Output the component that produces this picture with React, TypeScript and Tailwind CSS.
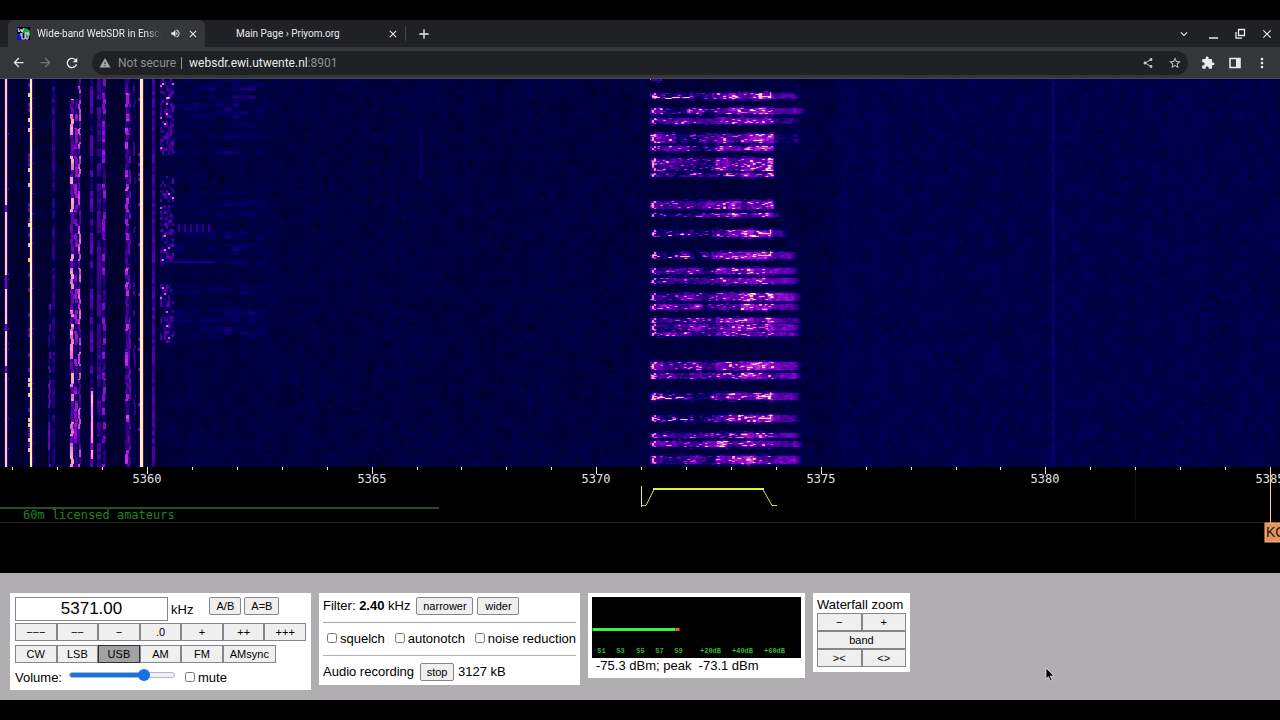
import React, { useEffect, useRef, useState } from "react";
import {
  MdAdd,
  MdArrowBack,
  MdArrowForward,
  MdClose,
  MdExpandMore,
  MdExtension,
  MdMoreVert,
  MdRefresh,
  MdShare,
  MdStarBorder,
  MdVolumeUp,
  MdWarning,
} from "react-icons/md";

const WATERFALL_WIDTH = 1280;
const WATERFALL_HEIGHT = 388;

// Carriers on the left side of the band: position, width, level, dropout
const carriers = [
  { x: 5, w: 2, level: 0.95, gaps: 0.08 },
  { x: 30, w: 2, level: 1, gaps: 0 },
  { x: 52, w: 3, level: 0.34, gaps: 0.3 },
  { x: 48, w: 2, level: 0.5, gaps: 0.6, from: 225 },
  { x: 70, w: 3, level: 0.84, gaps: 0.45, from: 20 },
  { x: 74, w: 3, level: 0.6, gaps: 0.5, from: 20 },
  { x: 78, w: 2, level: 0.76, gaps: 0.5 },
  { x: 90, w: 3, level: 0.48, gaps: 0.3 },
  { x: 91, w: 2, level: 0.9, gaps: 0.15, from: 312, to: 380 },
  { x: 97, w: 4, level: 0.4, gaps: 0.25 },
  { x: 102, w: 3, level: 0.6, gaps: 0.5 },
  { x: 125, w: 3, level: 0.7, gaps: 0.55 },
  { x: 128, w: 2, level: 0.5, gaps: 0.5 },
  { x: 133, w: 2, level: 0.38, gaps: 0.7 },
  { x: 140, w: 3, level: 1, gaps: 0.02 },
  { x: 152, w: 3, level: 0.42, gaps: 0 },
];

// Bursts of the data signal: centre, height, right edge, level of the right part
const bursts = [
  { y: 0, h: 3, end: 662, tail: 0 },
  { y: 17, h: 6, end: 802, tail: 0.42, hook: true },
  { y: 32, h: 6, end: 806, tail: 0.48 },
  { y: 42, h: 6, end: 804, tail: 0.34 },
  { y: 59, h: 9, end: 804, tail: 0.28 },
  { y: 69, h: 5, end: 804, tail: 0.26 },
  { y: 85, h: 13, end: 774, tail: 0 },
  { y: 96, h: 4, end: 780, tail: 0.3 },
  { y: 126, h: 8, end: 778, tail: 0.34 },
  { y: 136, h: 4, end: 784, tail: 0.38 },
  { y: 154, h: 7, end: 788, tail: 0.44, hook: true },
  { y: 176, h: 7, end: 798, tail: 0.48, hook: true },
  { y: 192, h: 6, end: 799, tail: 0.54 },
  { y: 202, h: 6, end: 801, tail: 0.54 },
  { y: 218, h: 8, end: 802, tail: 0.54 },
  { y: 228, h: 6, end: 802, tail: 0.5 },
  { y: 241, h: 5, end: 802, tail: 0.48 },
  { y: 248, h: 7, end: 802, tail: 0.48 },
  { y: 255, h: 4, end: 801, tail: 0.48 },
  { y: 287, h: 8, end: 802, tail: 0.54 },
  { y: 297, h: 6, end: 802, tail: 0.5 },
  { y: 317, h: 7, end: 802, tail: 0.48, hook: true },
  { y: 339, h: 7, end: 802, tail: 0.48, hook: true },
  { y: 356, h: 5, end: 802, tail: 0.5 },
  { y: 365, h: 6, end: 804, tail: 0.48 },
  { y: 381, h: 8, end: 802, tail: 0.54 },
];

// Level to colour, from dark blue over purple to pale yellow
const palette = [
  [0, 0, 0, 16],
  [0.25, 0, 0, 96],
  [0.38, 50, 0, 132],
  [0.55, 116, 0, 190],
  [0.7, 184, 30, 222],
  [0.84, 246, 140, 206],
  [1, 255, 242, 160],
];

const noise = (x: number, y: number, seed: number) => {
  let h =
    Math.imul(x + 17, 374761393) ^
    Math.imul(y + 31, 668265263) ^
    Math.imul(seed + 7, 1442695041);
  h = Math.imul(h ^ (h >>> 13), 1274126177);
  h = Math.imul(h ^ (h >>> 16), 2246822519);
  return ((h ^ (h >>> 15)) >>> 0) / 4294967296;
};

const colorOf = (level: number) => {
  const v = Math.max(0, Math.min(1, level));
  for (let i = 1; i < palette.length; i++) {
    const a = palette[i - 1];
    const b = palette[i];
    if (v <= b[0]) {
      const t = (v - a[0]) / (b[0] - a[0]);
      return [1, 2, 3].map((c) => a[c] + (b[c] - a[c]) * t);
    }
  }
  return [255, 242, 160];
};

const buildLevels = () => {
  const w = WATERFALL_WIDTH;
  const h = WATERFALL_HEIGHT;
  const levels = new Float32Array(w * h);
  const raise = (x: number, y: number, v: number) => {
    if (x < 0 || y < 0 || x >= w || y >= h) return;
    levels[y * w + x] = Math.max(levels[y * w + x], v);
  };
  // Averages a column range with its neighbours
  const smooth = (from: number, to: number) => {
    const copy = levels.slice();
    for (let y = 1; y < h - 1; y++) {
      for (let x = from; x < to; x++) {
        const i = y * w + x;
        levels[i] =
          copy[i] * 0.5 +
          (copy[i - 1] + copy[i + 1]) * 0.16 +
          (copy[i - w] + copy[i + w]) * 0.09;
      }
    }
  };

  // Noise floor
  for (let y = 0; y < h; y++) {
    for (let x = 0; x < w; x++) {
      let v = x > 835 ? 0.18 : 0.15;
      if (x < 160) v = 0.11;
      if (x > 648 && x < 776) v = 0.13;
      v += (noise(x >> 1, Math.floor(y / 3), 1) - 0.5) * 0.05;
      v += (noise(x >> 3, y >> 3, 2) - 0.5) * 0.05;
      v += (noise(x >> 2, 0, 3) - 0.5) * 0.02;
      if (noise(x >> 2, y >> 2, 4) > 0.97) v -= 0.06;
      levels[y * w + x] = v;
    }
  }
  smooth(1, w - 1);

  // Weak steady lines
  for (let y = 0; y < h; y++) {
    for (let x = 1051; x < 1055; x++) {
      raise(x, y, 0.24 + noise(x, y >> 2, 19) * 0.05);
    }
    for (let x = 843; x < 846; x++) raise(x, y, 0.21);
    if (y > 55 && y < 100) {
      raise(420, y, 0.27);
      raise(421, y, 0.27);
    }
  }

  // Mottled voice signal
  [
    [0, 76],
    [97, 186],
    [205, 264],
  ].forEach(([from, to]) => {
    for (let y = from; y < to; y++) {
      for (let x = 160; x < 174; x++) {
        const r = noise(x >> 1, Math.floor(y / 3), 10);
        if (r > 0.4) raise(x, y, 0.22 + (r - 0.4) * 0.55);
        if (noise(x >> 1, y >> 1, 11) > 0.98) raise(x, y, 0.95);
      }
      const row = noise(0, Math.floor(y / 4), 12);
      if (row > 0.3) {
        for (let x = 174; x < 268; x++) {
          const r = noise(x >> 3, Math.floor(y / 4), 13);
          const near = x > 222 && x < 257 ? 0.04 : 0;
          if (r > 0.35) raise(x, y, 0.16 + near + (r - 0.35) * 0.2 * row);
        }
      }
    }
  });
  for (let x = 178; x < 214; x += 6) {
    for (let y = 145; y < 153; y++) {
      raise(x, y, 0.5);
      raise(x + 1, y, 0.44);
    }
  }
  for (let x = 165; x < 215; x++) {
    raise(x, 182, 0.36);
    raise(x, 183, 0.34);
  }
  smooth(158, 290);
  smooth(174, 290);

  carriers.forEach((c, n) => {
    for (let y = c.from ?? 0; y < (c.to ?? h); y++) {
      const off = noise(n, Math.floor(y / 7), 5) < c.gaps;
      const shift =
        c.gaps > 0.35 ? Math.floor(noise(n, Math.floor(y / 5), 6) * 2) : 0;
      const v = off ? c.level * 0.6 : c.level;
      const jitter = c.level > 0.94 ? 0 : (noise(n, y >> 2, 8) - 0.5) * 0.12;
      for (let i = 0; i < c.w; i++) {
        raise(c.x + i + shift, y, v + jitter);
      }
      raise(c.x - 1, y, v * 0.34);
      raise(c.x + c.w, y, v * 0.45);
    }
  });

  // Keying knobs beside the carriers
  for (let y = 4; y < h; y += 5) {
    const r = noise(1, y, 9);
    if (r > 0.5) {
      for (let j = 0; j < 4; j++) {
        raise(28, y + j, r > 0.75 ? 0.9 : 0.5);
        raise(29, y + j, r > 0.75 ? 0.92 : 0.6);
      }
    }
    if (noise(2, y, 9) > 0.75) raise(33, y, 0.6);
    if (noise(3, y, 9) > 0.85) {
      for (let j = 0; j < 3; j++) {
        raise(138, y + j, 0.55);
        raise(139, y + j, 0.6);
      }
    }
    if (noise(4, y, 9) > 0.85) {
      raise(8, y, 0.5);
      raise(8, y + 1, 0.5);
      raise(4, y + 1, 0.5);
    }
  }

  // Data signal
  bursts.forEach((b, n) => {
    const top = b.y - Math.floor(b.h / 2);
    for (let j = -2; j < b.h + 2; j++) {
      const y = top + j;
      const soft = j < 0 || j >= b.h;
      for (let x = 650; x < b.end; x++) {
        const patch = noise(Math.floor(x / 13), n, 14);
        const streak = noise(Math.floor((x + y) / 5), y >> 1, 15);
        const fine = noise(x >> 1, y >> 1, 16);
        let v = 0.18 + patch * 0.24 + streak * 0.2 + (fine - 0.5) * 0.18;
        if (x > 715 && x < 774) v += 0.1;
        if (x > 745 && x < 773) v += 0.06;
        if (b.hook && x > 693 && x < 712) v -= 0.16;
        if (b.hook && x < 693) v -= 0.06;
        const limit = x > 715 && x < 773 ? 0.85 : 0.91;
        if (noise(Math.floor(x / 3), y, 17) > limit && x < 774) v += 0.44;
        if (x >= 774) {
          v = b.tail - 0.08 + (patch - 0.5) * 0.1 + streak * 0.14;
          v += (fine - 0.5) * 0.1;
          // fades out towards the right edge
          v *= Math.min(1, 0.35 + (b.end - x) / 12);
        }
        if (soft) v = v * 0.5;
        raise(x, y, v);
      }
      if (!soft && b.end > 770) {
        const arc = Math.abs(j - b.h / 2) > b.h / 4 ? 2 : 0;
        raise(652 + arc, y, 0.95);
        raise(653 + arc, y, 0.95);
      }
    }
    if (b.hook) {
      for (let x = 654; x < 690; x++) {
        const y = b.y + Math.round(Math.sin((x - 654) / 7) + (x - 654) / 20);
        if (noise(x >> 2, n, 18) > 0.3) raise(x, y, 1.1);
      }
      for (let x = 758; x < 771; x++) raise(x, b.y, 1);
      for (let y = b.y - 4; y < b.y + 1; y++) raise(770, y, 1.1);
    }
  });
  smooth(646, 810);

  return levels;
};

const Waterfall = () => {
  const ref = useRef<HTMLCanvasElement>(null);

  useEffect(() => {
    const ctx = ref.current?.getContext("2d");
    if (!ctx) return;
    const levels = buildLevels();
    const image = ctx.createImageData(WATERFALL_WIDTH, WATERFALL_HEIGHT);
    for (let i = 0; i < levels.length; i++) {
      const [r, g, b] = colorOf(levels[i]);
      image.data[i * 4] = r;
      image.data[i * 4 + 1] = g;
      image.data[i * 4 + 2] = b;
      image.data[i * 4 + 3] = 255;
    }
    ctx.putImageData(image, 0, 0);
  }, []);

  return (
    <canvas
      ref={ref}
      width={WATERFALL_WIDTH}
      height={WATERFALL_HEIGHT}
      className="block w-full h-[388px] object-cover object-left"
      aria-label="Waterfall"
    />
  );
};

const FrequencyScale = () => {
  const ticks = Array.from({ length: 29 }, (_, i) => 5357 + i);
  const xOf = (khz: number) => Math.round(147 + (khz - 5360) * 44.92);
  return (
    <svg className="block w-full h-[106px] bg-black" aria-label="Frequency scale">
      {ticks.map((khz) => (
        <rect
          key={khz}
          x={xOf(khz)}
          y={0}
          width={1}
          height={khz % 5 === 0 ? 7 : 3}
          fill="#e8e8e8"
        />
      ))}
      <g
        fontFamily="'DejaVu Sans Mono', monospace"
        fontSize={12}
        fill="#e4e4e4"
        textAnchor="middle"
      >
        {ticks
          .filter((khz) => khz % 5 === 0)
          .map((khz) => (
            <text key={khz} x={xOf(khz)} y={16}>
              {khz}
            </text>
          ))}
      </g>
      <rect x={0} y={40} width={439} height={2} fill="#25502a" />
      <text
        x={23}
        y={52}
        fontFamily="'DejaVu Sans Mono', monospace"
        fontSize={12}
        fill="#228326"
      >
        60m licensed amateurs
      </text>
      <rect x={0} y={55} width="100%" height={1} fill="#242126" />
      <rect x={1135} y={3} width={1} height={50} fill="#111111" />
      <path d="M641.5 19V40" stroke="#f0f050" fill="none" />
      <path
        d="M641 38.5H646L654 22.5M763 22.5L772 38.5H777"
        stroke="#d8e030"
        fill="none"
      />
      <path d="M653 22H764" stroke="#e2f52c" strokeWidth={2} fill="none" />
      <rect x={1270} y={0} width={1} height={56} fill="#ffc9a8" />
      <rect x={1265} y={56} width={60} height={19} fill="#e2935e" stroke="#f0b48a" />
      <text
        x={1266}
        y={70}
        fontFamily="'Liberation Sans', Arial, sans-serif"
        fontSize={14}
        fill="#2a1408"
      >
        KC
      </text>
    </svg>
  );
};

const Favicon = () => (
  <svg width="13" height="13" viewBox="0 0 13 13" className="shrink-0">
    <rect width="13" height="13" fill="#05052c" />
    <path d="M0 7h5v6H0z" fill="#1018c8" />
    <path d="M5 3q4-4 8 1v5h-3V6H5z" fill="#18a838" />
    <path
      d="M1 1l1 4 2-3 1 3 2-4M4 6v3M5 6v6h3V6M8 6h4M9 6v6h2V6"
      stroke="#e8f0ff"
      strokeWidth="1"
      fill="none"
    />
  </svg>
);

const BrowserHeader = () => {
  return (
    <header className="font-['Roboto',sans-serif] text-xs text-[#e8eaed]">
      <div className="flex h-[27px] items-stretch bg-[#202124]">
        <div className="w-2 shrink-0 bg-[#202124]" />
        <div className="flex w-[197px] shrink-0 items-center rounded-t-md bg-[#35363a] pl-[9px] pr-[6px]">
          <Favicon />
          <span className="ml-[7px] w-[125px] overflow-hidden pt-px text-[10px] leading-4 whitespace-nowrap [mask-image:linear-gradient(to_right,black_88%,transparent)]">
            Wide-band WebSDR in Enschede
          </span>
          <MdVolumeUp className="ml-[9px] size-[11px]" />
          <button aria-label="Close tab" className="ml-[6px]">
            <MdClose className="size-[12px]" />
          </button>
        </div>
        <div className="my-[6px] flex w-[201px] shrink-0 items-center border-r border-[#44454a] pl-[31px] pr-[6px]">
          <span className="grow pt-px text-[10px] leading-4 whitespace-nowrap">
            Main Page › Priyom.org
          </span>
          <button aria-label="Close tab">
            <MdClose className="size-[12px]" />
          </button>
        </div>
        <button aria-label="New tab" className="ml-[10px]">
          <MdAdd className="size-4" />
        </button>
        <div className="ml-auto flex items-center gap-[14px] pr-[6px]">
          <button aria-label="Search tabs" className="mr-[3px]">
            <MdExpandMore className="size-[14px]" />
          </button>
          <button aria-label="Minimize">
            <svg width="12" height="12" viewBox="0 0 12 12">
              <path d="M1 10h9" stroke="currentColor" strokeWidth="1.5" />
            </svg>
          </button>
          <button aria-label="Restore">
            <svg width="12" height="12" viewBox="0 0 12 12" fill="none" stroke="currentColor" strokeWidth="1.3">
              <path d="M4.5 1.5h6v6h-6zM2 4v6.2h6" />
            </svg>
          </button>
          <button aria-label="Close">
            <MdClose className="size-[14px]" />
          </button>
        </div>
      </div>
      <div className="flex h-8 items-center border-b border-[#4a4a55] bg-[#35363a] pr-[10px] pl-[11px]">
        <button aria-label="Back">
          <MdArrowBack className="size-[15px]" />
        </button>
        <button aria-label="Forward" className="ml-[12px] text-[#76777b]">
          <MdArrowForward className="size-[15px]" />
        </button>
        <button aria-label="Reload" className="ml-[11px]">
          <MdRefresh className="size-4" />
        </button>
        <div className="ml-[12px] flex h-6 grow items-center rounded-full bg-[#202124] pr-[6px] pl-[7px]">
          <MdWarning className="size-[12px] text-[#a4a6aa]" />
          <span className="ml-[7px] text-[#8e9094]">Not secure</span>
          <span className="ml-[5px] h-3 w-px bg-[#8e9094]" />
          <a href="#" className="ml-[7px]">
            websdr.ewi.utwente.nl<span className="text-[#8e9094]">:8901</span>
          </a>
          <button aria-label="Share" className="ml-auto">
            <MdShare className="size-[12px] text-[#c4c6ca]" />
          </button>
          <button aria-label="Bookmark" className="ml-[14px]">
            <MdStarBorder className="size-[14px] text-[#c4c6ca]" />
          </button>
        </div>
        <button aria-label="Extensions" className="ml-[13px]">
          <MdExtension className="size-[14px]" />
        </button>
        <button aria-label="Side panel" className="ml-[14px]">
          <svg width="12" height="12" viewBox="0 0 12 12">
            <path d="M1 1.5h10v9H1z" stroke="currentColor" strokeWidth="1.6" fill="none" />
            <path d="M7 1h4v10H7z" fill="currentColor" />
          </svg>
        </button>
        <button aria-label="Menu" className="ml-[13px]">
          <MdMoreVert className="size-4" />
        </button>
      </div>
    </header>
  );
};

type ButtonProps = React.ButtonHTMLAttributes<HTMLButtonElement> & {
  pressed?: boolean;
};

const Button = ({ pressed, className = "", ...props }: ButtonProps) => (
  <button
    className={`h-[18px] border text-[11px] leading-[16px] text-black ${
      pressed ? "border-[#303038] bg-[#a2a2a2]" : "border-[#86868a] bg-[#efeff0]"
    } ${className}`}
    {...props}
  />
);

const Check = ({ label }: { label: string }) => (
  <label className="flex items-center gap-[3px] whitespace-nowrap">
    <input type="checkbox" className="mb-[2px] size-[10px]" />
    {label}
  </label>
);

const tuneSteps = ["−−−", "−−", "−", ".0", "+", "++", "+++"];
const modes = ["CW", "LSB", "USB", "AM", "FM", "AMsync"];

const TuningPanel = () => {
  const [frequency, setFrequency] = useState("5371.00");
  const [mode, setMode] = useState("USB");
  const [volume, setVolume] = useState(74);

  return (
    <section className="w-[301px] bg-white px-[5px] pt-1 pb-[3px]">
      <div className="flex items-start">
        <input
          aria-label="Frequency"
          value={frequency}
          onChange={(e) => setFrequency(e.target.value)}
          className="h-6 w-[153px] border border-[#86868a] bg-white text-center text-[17px]"
        />
        <span className="mt-[5px] ml-[3px]">kHz</span>
        <Button className="ml-4 w-8 rounded-xs">A/B</Button>
        <Button className="ml-[3px] w-[35px] rounded-xs">A=B</Button>
      </div>
      <div className="mt-[2px] grid grid-cols-7">
        {tuneSteps.map((step) => (
          <Button key={step}>{step}</Button>
        ))}
      </div>
      <div className="mt-[4px] grid grid-cols-7">
        {modes.map((m) => (
          <Button
            key={m}
            pressed={m === mode}
            onClick={() => setMode(m)}
            className={m === "AMsync" ? "w-[53px]" : ""}
          >
            {m}
          </Button>
        ))}
      </div>
      <div className="mt-[2px] flex h-[22px] items-center">
        <label htmlFor="volume" className="mt-[3px]">
          Volume:
        </label>
        <input
          id="volume"
          type="range"
          value={volume}
          onChange={(e) => setVolume(Number(e.target.value))}
          style={{
            backgroundImage: `linear-gradient(to right, #1573e6 ${volume}%, #f1f1f3 ${volume}%)`,
          }}
          className="mb-[3px] ml-[7px] h-[6px] w-[106px] appearance-none rounded-full border border-[#b4b6c4] bg-origin-border [&::-webkit-slider-thumb]:size-3 [&::-webkit-slider-thumb]:appearance-none [&::-webkit-slider-thumb]:rounded-full [&::-webkit-slider-thumb]:bg-[#1573e6]"
        />
        <div className="mt-[3px] ml-[10px]">
          <Check label="mute" />
        </div>
      </div>
    </section>
  );
};

const FilterPanel = () => {
  return (
    <section className="w-[261px] bg-white p-1">
      <div className="flex items-center">
        <span>
          Filter: <b>2.40</b> kHz
        </span>
        <Button className="ml-[6px] w-[57px] rounded-xs">narrower</Button>
        <Button className="ml-[4px] w-[42px] rounded-xs">wider</Button>
      </div>
      <hr className="mt-[7px] border-[#a4a4a4]" />
      <div className="flex h-8 items-center justify-between pl-1">
        <Check label="squelch" />
        <Check label="autonotch" />
        <Check label="noise reduction" />
      </div>
      <hr className="border-[#b4b4b4]" />
      <div className="mt-[7px] flex items-center">
        Audio recording
        <Button className="mr-1 ml-[6px] w-[34px] rounded-xs">stop</Button>
        3127 kB
      </div>
    </section>
  );
};

const meterLabels = [
  { text: "S1", x: 9 },
  { text: "S3", x: 28 },
  { text: "S5", x: 48 },
  { text: "S7", x: 67 },
  { text: "S9", x: 86 },
  { text: "+20dB", x: 118 },
  { text: "+40dB", x: 150 },
  { text: "+60dB", x: 182 },
];

const SignalPanel = () => {
  return (
    <section className="w-[217px] bg-white p-1">
      <svg viewBox="0 0 208 61" className="block h-[61px] w-full bg-black" aria-label="Signal strength">
        <rect x={0} y={31} width={83} height={3} fill="#3cf23c" />
        <rect x={83} y={31} width={4} height={3} fill="#e8623c" />
        <g
          fontFamily="'Liberation Mono', monospace"
          fontSize={7}
          fontWeight="bold"
          fill="#35b835"
          textAnchor="middle"
        >
          {meterLabels.map((label) => (
            <text key={label.text} x={label.x} y={56}>
              {label.text}
            </text>
          ))}
        </g>
      </svg>
      <p className="pl-1 whitespace-pre">-75.3 dBm; peak  -73.1 dBm</p>
    </section>
  );
};

const ZoomPanel = () => {
  return (
    <section className="w-[97px] bg-white px-1 pt-1 pb-[5px]">
      <p className="whitespace-nowrap">Waterfall zoom</p>
      <div className="grid grid-cols-2">
        <Button>−</Button>
        <Button>+</Button>
        <Button className="col-span-2">band</Button>
        <Button>&gt;&lt;</Button>
        <Button>&lt;&gt;</Button>
      </div>
    </section>
  );
};

const App = () => {
  return (
    <div className="relative min-h-screen overflow-hidden bg-black py-5">
      <BrowserHeader />
      <main className="font-['Liberation_Sans',Arial,sans-serif] text-[13px] leading-4 text-black">
        <Waterfall />
        <FrequencyScale />
        <div className="flex min-h-[127px] flex-wrap items-start gap-2 bg-[#b0aeb0] px-[10px] pt-5 pb-[10px]">
          <TuningPanel />
          <FilterPanel />
          <SignalPanel />
          <ZoomPanel />
        </div>
      </main>
      {/* Mouse pointer */}
      <svg
        width="10"
        height="15"
        viewBox="0 0 10 15"
        className="pointer-events-none absolute top-[667px] left-[1045px]"
      >
        <path
          d="M1 1v11l2.5-2.3 1.8 4 1.8-.8-1.8-3.8H9z"
          fill="#000"
          stroke="#e4e4e4"
          strokeWidth="0.8"
        />
      </svg>
    </div>
  );
};

export default App;
